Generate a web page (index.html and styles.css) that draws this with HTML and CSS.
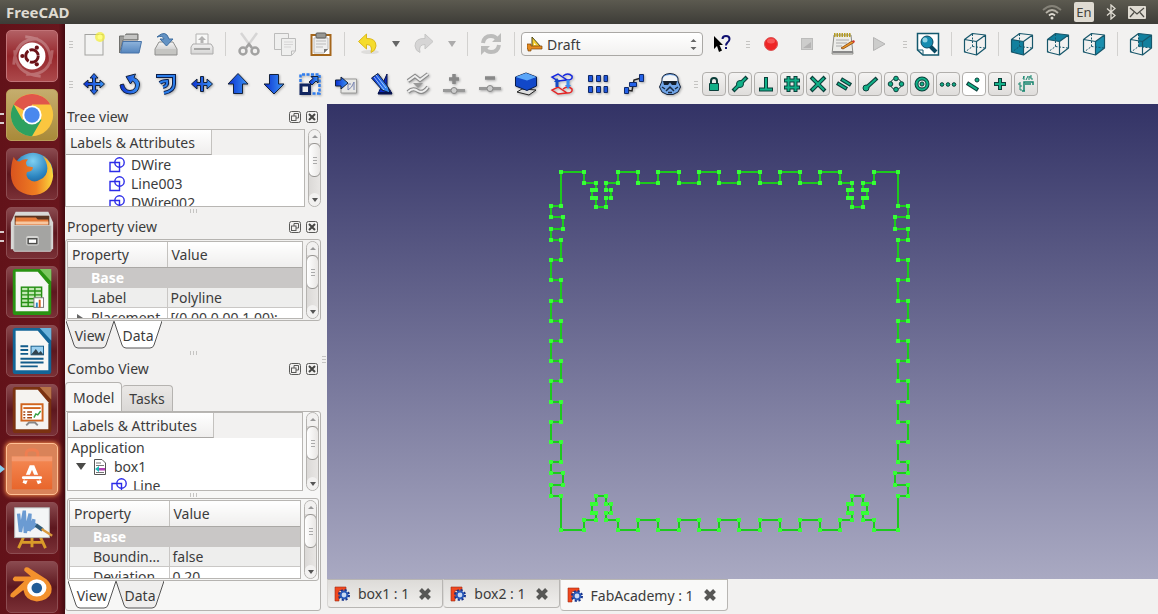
FILE: index.html
```html
<!DOCTYPE html>
<html lang="en">
<head>
    <meta charset="UTF-8">
    <meta name="viewport" content="width=device-width, initial-scale=1.0">
    <title>FreeCAD</title>
    <link rel="stylesheet" href="styles.css">
</head>
<body>
    <!-- Shared gradients and symbols -->
    <svg class="defs" width="0" height="0" aria-hidden="true">
        <defs>
            <linearGradient id="blue" x1="0" y1="0" x2="1" y2="0"><stop offset="0" stop-color="#0a2fd0"/><stop offset="1" stop-color="#3d96f5"/></linearGradient>
            <linearGradient id="grey" x1="0" y1="0" x2="0" y2="1"><stop offset="0" stop-color="#f4f4f4"/><stop offset="1" stop-color="#b9b9b9"/></linearGradient>
            <linearGradient id="folder" x1="0" y1="0" x2="0" y2="1"><stop offset="0" stop-color="#8fb4dc"/><stop offset="1" stop-color="#5585bd"/></linearGradient>
            <linearGradient id="orange" x1="0" y1="0" x2="0" y2="1"><stop offset="0" stop-color="#f58a55"/><stop offset="1" stop-color="#e8662c"/></linearGradient>
            <radialGradient id="globe" cx="0.5" cy="0.2" r="0.8"><stop offset="0" stop-color="#7fd0f2"/><stop offset="0.5" stop-color="#2b84bf"/><stop offset="1" stop-color="#12386e"/></radialGradient>
            <linearGradient id="fox" x1="0" y1="0" x2="1" y2="0"><stop offset="0" stop-color="#d9541e"/><stop offset="0.6" stop-color="#ef7d22"/><stop offset="1" stop-color="#fbd93c"/></linearGradient>
        </defs>
        <symbol id="shape" viewBox="0 0 16 16">
            <g fill="none" stroke="#2c2ce8" stroke-width="1.4"><path d="M1 5.500H10.500V14.500H1Z"/><circle cx="10.500" cy="5.500" r="4.700"/></g>
        </symbol>
        <symbol id="float" viewBox="0 0 12 12">
            <g fill="none" stroke="#5a5a58" stroke-width="1"><rect x="0.500" y="0.500" width="11" height="11" rx="2"/><path d="M5 5V2.500H9.500V7H7"/><rect x="2.500" y="5" width="4.500" height="4.500"/></g>
        </symbol>
        <symbol id="close" viewBox="0 0 12 12">
            <rect x="0.500" y="0.500" width="11" height="11" rx="2" fill="none" stroke="#5a5a58"/><path d="M3 3L9 9M9 3L3 9" stroke="#454543" stroke-width="2"/>
        </symbol>
        <symbol id="freecad" viewBox="0 0 16 16">
            <path d="M1 1H12V4.500H5V6.500H9V9.500H5V15H1Z" fill="#f0481f" stroke="#a02a10" stroke-width="0.600"/>
            <circle cx="10" cy="9" r="4.700" fill="none" stroke="#15318a" stroke-width="2.600" stroke-dasharray="2 1.690"/>
            <circle cx="10" cy="9" r="3.400" fill="#c9d8f2" stroke="#2858b8" stroke-width="2"/>
        </symbol>
        <symbol id="cross" viewBox="0 0 14 14">
            <path d="M2.500 2.500L11.500 11.500M11.500 2.500L2.500 11.500" stroke="#575755" stroke-width="4"/>
        </symbol>
        <symbol id="cube" viewBox="0 0 24 24">
            <path d="M1.500 7.500L13.500 9.500V23L1.500 20ZM1.500 7.500L9.500 1.500L22.500 3L13.500 9.500M22.500 3V16L13.500 23" fill="none" stroke="#17576b" stroke-width="1.200" stroke-linejoin="round"/>
            <path d="M9.500 2V14.500L2 20M9.500 14.500L22 16" fill="none" stroke="#17576b" stroke-width="1" stroke-dasharray="2 1.500"/>
        </symbol>
    </svg>

    <header class="menubar">
        <h1>FreeCAD</h1>
        <div class="indicators">
            <svg width="20" height="16" viewBox="0 0 20 16" fill="none" stroke-width="1.800"><path d="M1 6Q10-2 19 6" stroke="#858278"/><path d="M4 9Q10 3 16 9" stroke="#b5b1a6"/><path d="M7 11.500Q10 8.500 13 11.500" stroke="#dfdbd2"/><circle cx="10" cy="14" r="1.500" fill="#dfdbd2"/></svg>
            <span class="lang">En</span>
            <svg width="10" height="16" viewBox="0 0 10 16" fill="none" stroke="#dfdbd2" stroke-width="1.300"><path d="M1 4.500L9 11.500L5 15V1L9 4.500L1 11.500"/></svg>
            <svg width="18" height="13" viewBox="0 0 18 13"><rect width="18" height="13" rx="1" fill="#dfdbd2"/><path d="M2 2L9 8L16 2M2 11L6 6.500M16 11L12 6.500" fill="none" stroke="#4a4943" stroke-width="1.200"/></svg>
        </div>
    </header>

    <div class="desktop">
        <!-- Launcher -->
        <nav class="launcher">
            <button class="tile red" aria-label="Search your computer">
                <svg viewBox="0 0 52 52"><path d="M7 35Q8 8 32 8M19 6Q47 8 45 34M47 20Q46 47 20 45M35 47Q8 45 8 20" fill="none" stroke="#fff" stroke-opacity="0.250" stroke-width="3"/><circle cx="26" cy="26" r="14" fill="#fff"/><circle cx="26" cy="26" r="6.500" fill="none" stroke="#6c1218" stroke-width="3" stroke-dasharray="12.200 1.420"/><g fill="#6c1218"><circle cx="16" cy="26" r="2.200"/><circle cx="31" cy="17.300" r="2.200"/><circle cx="31" cy="34.700" r="2.200"/></g></svg>
            </button>
            <button class="tile gold open" aria-label="Google Chrome">
                <svg viewBox="0 0 52 52"><circle cx="26" cy="26" r="22" fill="#fbc63f"/><path d="M26 26L7 15A22 22 0 0 1 45 15H26Z" fill="#e0564a"/><path d="M7 15A22 22 0 0 0 26 48L36 31L26 26L16 31Z" fill="#2da160"/><circle cx="26" cy="26" r="10" fill="#fff"/><circle cx="26" cy="26" r="8" fill="#4a88ee"/></svg>
            </button>
            <button class="tile" aria-label="Firefox">
                <svg viewBox="0 0 52 52"><circle cx="27" cy="25" r="21" fill="url(#globe)"/><path d="M7 8Q9 13 13 13Q17 10 22 11Q18 14 21 18L27 19Q27 23 21 24Q19 27 22 31Q28 36 34 32Q42 29 42 20Q42 14 37 7Q48 13 48 28Q46 47 26 48Q5 46 4 26Q4 16 7 8Z" fill="url(#fox)"/></svg>
            </button>
            <button class="tile open" aria-label="Files">
                <svg viewBox="0 0 52 52"><path d="M9 4H43L48 15V43H4V15Z" fill="#d8d8d6"/><rect x="8" y="8" width="36" height="12" fill="#5a3420"/><path d="M9 10H30L32 12H43V19H9Z" fill="#e77b39"/><path d="M9 14H43V17H9Z" fill="#f7c7a0"/><rect x="7" y="18" width="39" height="27" rx="1" fill="#a4a4a2" stroke="#d0d0ce"/><rect x="20" y="29" width="13" height="10" rx="2" fill="#d5d5d3"/><rect x="22" y="32" width="9" height="5" fill="#fff" stroke="#4a4a48" stroke-width="1.500"/></svg>
            </button>
            <button class="tile" aria-label="LibreOffice Calc">
                <svg viewBox="0 0 52 52"><rect x="6" y="2" width="40" height="48" rx="3" fill="#2a9312"/><path d="M9 5H32L43 18V46H9Z" fill="#f7f7f5"/><path d="M34 2H46V15Z" fill="#7cc65f"/><g fill="none" stroke="#279015" stroke-width="1.500"><rect x="15" y="21" width="21" height="20" fill="#c4e9b5"/><path d="M15 25H36M15 29H36M15 33H36M15 37H36M22 21V41M29 21V41"/></g><rect x="28" y="32" width="10" height="10" fill="#fff" stroke="#777"/><path d="M30 42V37H32V42" fill="#2b88c4"/><path d="M33 42V34H35V42" fill="#d95d1a"/></svg>
            </button>
            <button class="tile" aria-label="LibreOffice Writer">
                <svg viewBox="0 0 52 52"><rect x="6" y="2" width="40" height="48" rx="3" fill="#136597"/><path d="M9 5H32L43 18V46H9Z" fill="#f7f7f5"/><path d="M34 2H46V15Z" fill="#6cb3dc"/><path d="M14 21H22M14 25H22M14 29H22M14 34H38M14 38H38M14 42H32" stroke="#135c8b" stroke-width="2"/><rect x="25" y="21" width="13" height="9" fill="#9bd0f0" stroke="#135c8b"/><path d="M25 30L30 24L33 28L35 26L38 30Z" fill="#31444f"/></svg>
            </button>
            <button class="tile" aria-label="LibreOffice Impress">
                <svg viewBox="0 0 52 52"><rect x="6" y="2" width="40" height="48" rx="3" fill="#7b3210"/><path d="M9 5H32L43 18V46H9Z" fill="#f5f3f0"/><path d="M34 2H46V15Z" fill="#b77347"/><rect x="15" y="20" width="22" height="17" fill="#fff" stroke="#d0651f" stroke-width="2"/><path d="M17 24H35" stroke="#d0651f" stroke-width="2"/><path d="M17 28H19M17 31H19M17 34H19M21 28H26M21 31H26M21 34H26" stroke="#a34513" stroke-width="1.500"/><path d="M28 34L30 30L32 31L35 27" fill="none" stroke="#35a044" stroke-width="1.500"/><path d="M26 38V40M20 42L23 39H29L32 42" fill="none" stroke="#888" stroke-width="2"/></svg>
            </button>
            <button class="tile glow active" aria-label="Ubuntu Software Center">
                <svg viewBox="0 0 52 52"><path d="M20 18V10Q20 6 26 6Q32 6 32 10V18" fill="none" stroke="#ef7e51" stroke-width="3"/><path d="M5 13H47V47H5Z" fill="url(#orange)"/><path d="M5 13H47V18H5Z" fill="#f49a70"/><path d="M18 41L25 24H27L34 41" fill="none" stroke="#fff" stroke-width="4"/><path d="M18 35H34" stroke="#ee7440" stroke-width="6"/><path d="M17 35H35" stroke="#fff" stroke-width="3" stroke-linecap="round"/></svg>
            </button>
            <button class="tile" aria-label="KolourPaint">
                <svg viewBox="0 0 52 52"><path d="M17 36L12 47M35 36L40 47M26 36V46M15 41H37" stroke="#d99b29" stroke-width="3"/><rect x="8" y="5" width="36" height="31" fill="#f3f5f6" stroke="#b5bbbd"/><path d="M12 11L14 30L18 8L19 31L24 11L23 29L28 17L27 25L31 22" fill="none" stroke="#6b9bd2" stroke-width="3.500"/><path d="M30 23L37 28" stroke="#315b78" stroke-width="4"/><path d="M36 27L47 34" stroke="#d99a3c" stroke-width="2.500"/></svg>
            </button>
            <button class="tile" aria-label="Blender">
                <svg viewBox="0 0 52 52"><path d="M18 7Q20 4 24 7L41 18Q48 24 46 32Q43 40 31 41Q19 40 17 29L7 37Q2 37 4 33L18 20H8Q4 18 8 15H25L18 9Z" fill="#f3912d"/><ellipse cx="31" cy="27" rx="10" ry="9" fill="#fff"/><circle cx="31" cy="27" r="5.500" fill="#215c97"/></svg>
            </button>
            <button class="tile stack" aria-label="More applications"></button>
        </nav>

        <div class="app">
            <!-- File, workbench, macro and view toolbars -->
            <div class="toolbar">
                <span class="grip"></span>
                <button class="tool" aria-label="New"><svg viewBox="0 0 24 24"><rect x="3" y="2.500" width="18" height="20.500" fill="#f3f3f2" stroke="#a3a3a0"/><circle cx="18" cy="5" r="5" fill="#f4ee30" opacity="0.700"/><circle cx="18" cy="5" r="2.500" fill="#ffff80"/></svg></button>
                <button class="tool" aria-label="Open"><svg viewBox="0 0 24 24"><path d="M1.500 21V4H7L8 2H20V8H5Z" fill="#9b9b98" stroke="#71716e"/><path d="M6 4H19M6 6H19" stroke="#eee"/><path d="M5 9.500H23.500L21 21H2.500Z" fill="url(#folder)" stroke="#4773a8"/></svg></button>
                <button class="tool" aria-label="Save"><svg viewBox="0 0 24 24"><path d="M5 10H19L23 17V23H1V17Z" fill="url(#grey)" stroke="#90908d"/><path d="M2 17H22V22H2Z" fill="#c5c5c2"/><path d="M3 5Q12-3 15 7H19L12.500 14L6 7H10Q9 3 3 5Z" fill="#6292c4" stroke="#3e6d9f"/></svg></button>
                <button class="tool faded" aria-label="Print"><svg viewBox="0 0 24 24"><path d="M6 12V2H18V12" fill="#fff" stroke="#777"/><path d="M12 4L16 8H13.500V11H10.500V8H8Z" fill="#777"/><path d="M3 12H21L23 15V22H1V15Z" fill="url(#grey)" stroke="#666"/><path d="M4 17H20" stroke="#333" stroke-width="1.500"/></svg></button>
                <span class="separator"></span>
                <button class="tool faded" aria-label="Cut"><svg viewBox="0 0 24 24"><path d="M4 1L15 16M20 1L9 16" stroke="#bbb" stroke-width="2.500"/><g fill="none" stroke="#555" stroke-width="2.500"><circle cx="6" cy="19" r="3.500"/><circle cx="18" cy="19" r="3.500"/><path d="M9 16L12 12L15 16"/></g></svg></button>
                <button class="tool faded" aria-label="Copy"><svg viewBox="0 0 24 24" fill="#eee" stroke="#888"><path d="M1.500 1.500H15.500V17.500H1.500Z"/><path d="M8.500 6.500H22.500V19L18.500 23.500H8.500ZM22 19H18.500V23"/><path d="M11 10H20M11 12.500H20M11 15H18" stroke="#bbb"/></svg></button>
                <button class="tool" aria-label="Paste"><svg viewBox="0 0 24 24"><rect x="2.500" y="3" width="19" height="20" fill="#fff" stroke="#a5671c" stroke-width="2"/><path d="M5 6H19V17L15 21H5Z" fill="#eee" stroke="#bbb"/><path d="M7 9H17M7 12H17M7 15H14" stroke="#bbb"/><path d="M15 21V17H19Z" fill="#777"/><rect x="7" y="1" width="10" height="5" rx="1" fill="#989894" stroke="#5d5d5a"/></svg></button>
                <span class="separator"></span>
                <button class="tool" aria-label="Undo"><svg viewBox="0 0 24 24"><ellipse cx="14" cy="20" rx="9" ry="2" fill="#dedddb"/><path d="M2.500 9.500L10.500 2V6.500Q20 6 20 14Q19.500 19 15 20.500Q17 12.500 10.500 12.500V17Z" fill="#f5dc2d" stroke="#dcb81b"/></svg></button>
                <button class="drop" aria-label="Undo history"></button>
                <button class="tool faded" aria-label="Redo"><svg viewBox="0 0 24 24"><path d="M21 9.500L13 2V6.500Q3 6 3 14Q3.500 19 8 20.500Q6 12.500 13 12.500V17Z" fill="#bbb" stroke="#999"/></svg></button>
                <button class="drop faded" aria-label="Redo history"></button>
                <span class="separator"></span>
                <button class="tool faded" aria-label="Refresh"><svg viewBox="0 0 24 24" fill="none" stroke="#888" stroke-width="4"><path d="M4 11Q5 4 12 4Q16 4 18 7M20 13Q19 20 12 20Q8 20 6 17"/><path d="M22 1V10H13ZM2 23V14H11Z" fill="#888" stroke="none"/></svg></button>
                <span class="separator"></span>
                <div class="workbench">
                    <svg width="16" height="16" viewBox="0 0 16 16"><path d="M5 1L14 11H5Z" fill="#f2cd32" stroke="#4d4718"/><path d="M7 7L9 9H7Z" fill="#fff"/><path d="M0 8H4V10H15V13H4V15H1V13H0Z" fill="#e48b21" stroke="#7c4508" stroke-width="0.700"/></svg>
                    <select aria-label="Workbench"><option>Draft</option></select>
                    <svg class="updown" width="7" height="13" viewBox="0 0 7 13" fill="#666"><path d="M0.500 4L3.500 1L6.500 4ZM0.500 9L3.500 12L6.500 9Z"/></svg>
                </div>
                <button class="tool" aria-label="What's this?"><svg viewBox="0 0 24 24"><path d="M4 4V17L7 14L9 20L12 18.500L9.500 13H13Z" fill="#000"/><path d="M12.500 7Q12.500 4 16 4Q19.500 4 19.500 7Q19.500 9 17.500 10.500Q16 12 16 13.500M16 15V17" fill="none" stroke="#101070" stroke-width="2"/></svg></button>
                <span class="grip"></span>
                <button class="tool" aria-label="Record macro"><svg viewBox="0 0 24 24"><circle cx="12" cy="12" r="6.500" fill="#ee2626" stroke="#d55"/><ellipse cx="12" cy="9" rx="4" ry="2.500" fill="#f77" opacity="0.600"/></svg></button>
                <button class="tool faded" aria-label="Stop macro"><svg viewBox="0 0 24 24"><rect x="6.500" y="6.500" width="11" height="11" fill="#aaa" stroke="#888"/><path d="M8 16L16 10V16Z" fill="#777"/></svg></button>
                <button class="tool" aria-label="Macros"><svg viewBox="0 0 24 24"><path d="M3 3H20L22 22H1Z" fill="#ecece9" stroke="#8d8d88"/><path d="M1.500 20H22" stroke="#888" stroke-width="2"/><path d="M3 3H20" stroke="#b49b22" stroke-width="4" stroke-dasharray="1.500 1"/><path d="M5 8H18M5 11H16M5 14H11" stroke="#aaa"/><path d="M10 16L21 9L23 10.500L12 17Z" fill="#ee9a27" stroke="#804414" stroke-width="0.800"/><path d="M21 9L23 8L24 10L22.500 11Z" fill="#d4392e"/></svg></button>
                <button class="tool faded" aria-label="Run macro"><svg viewBox="0 0 24 24"><path d="M6.500 5.500L18 12L6.500 18.500Z" fill="#aaa" stroke="#777"/></svg></button>
                <span class="grip"></span>
                <button class="tool" aria-label="Fit all"><svg viewBox="0 0 24 24"><path d="M1.500 1.500H22.500V23H7L1.500 18Z" fill="#fff" stroke="#14596e" stroke-width="1.500"/><path d="M1.500 18H7V23" fill="none" stroke="#14596e"/><path d="M14 14L20 20" stroke="#0b4a62" stroke-width="4"/><circle cx="11" cy="10" r="6" fill="#168cb0" stroke="#0b4a62"/><circle cx="9" cy="8" r="2.500" fill="#8fd2e3"/></svg></button>
                <span class="separator"></span>
                <button class="tool" aria-label="Axonometric view"><svg viewBox="0 0 24 24"><use href="#cube"/></svg></button>
                <span class="separator"></span>
                <button class="tool" aria-label="Front view"><svg viewBox="0 0 24 24"><path d="M1.500 7.500L13.500 9.500V23L1.500 20Z" fill="#12809e"/><use href="#cube"/></svg></button>
                <button class="tool" aria-label="Top view"><svg viewBox="0 0 24 24"><path d="M1.500 7.500L9.500 1.500L22.500 3L13.500 9.500Z" fill="#12809e"/><use href="#cube"/></svg></button>
                <button class="tool" aria-label="Right view"><svg viewBox="0 0 24 24"><path d="M13.500 9.500L22.500 3V16L13.500 23Z" fill="#1b8fae"/><use href="#cube"/></svg></button>
                <span class="separator"></span>
                <button class="tool" aria-label="Rear view"><svg viewBox="0 0 24 24"><path d="M9.500 1.500L22.500 3V16L9.500 14.500Z" fill="#12809e"/><use href="#cube"/></svg></button>
            </div>

            <!-- Draft modification and snap toolbars -->
            <div class="toolbar draft">
                <span class="grip"></span>
                <button class="tool" aria-label="Move"><svg viewBox="0 0 24 24"><path class="solid" d="M12 1.500L16 6H13.500V10.500H18V8L22.500 12L18 16V13.500H13.500V18H16L12 22.500L8 18H10.500V13.500H6V16L1.500 12L6 8V10.500H10.500V6H8Z"/></svg></button>
                <button class="tool" aria-label="Rotate"><svg viewBox="0 0 24 24"><path class="solid" d="M2 13L5.500 12Q7 18.500 12 18.500Q17.500 18 17.500 13Q17 10 14.500 9L12.500 12L8 4.500L17.500 2L16 5.500Q22 8 21.500 13Q20.500 22 12 22Q3 21.500 2 13Z"/></svg></button>
                <button class="tool" aria-label="Offset"><svg viewBox="0 0 24 24" fill="none"><path d="M2 4H20V12Q20 19 10 21M6 11Q8 9 13 9Q14 14 9 15" stroke="#0c1e4a" stroke-width="4"/><path d="M3 4H20V12Q20 19 10 21M6 11Q8 9 13 9Q14 14 9 15" stroke="#2c7eeb" stroke-width="2"/></svg></button>
                <button class="tool" aria-label="Trim or extend"><svg viewBox="0 0 24 24"><path class="solid" d="M1.500 12L7 7V10.500H10.500V4.500H13.500V10.500H17V7L22.500 12L17 17V13.500H13.500V19.500H10.500V13.500H7V17Z"/></svg></button>
                <button class="tool" aria-label="Upgrade"><svg viewBox="0 0 24 24"><path class="solid" d="M12 1.500L22 12H16.500V21.500H7.500V12H2Z"/></svg></button>
                <button class="tool" aria-label="Downgrade"><svg viewBox="0 0 24 24"><path class="solid" d="M12 22L22 12H16.500V2.500H7.500V12H2Z"/></svg></button>
                <button class="tool" aria-label="Scale"><svg viewBox="0 0 24 24"><path d="M2.500 10V2.500H21.500V21.500H14" fill="none" stroke="#2f7df0" stroke-width="2.500" stroke-dasharray="3 1.500"/><rect x="3" y="13" width="8.500" height="8.500" fill="#eee" stroke="#102560" stroke-width="3"/><path class="solid" d="M11 10L15 6.500L13 4.500H20V11L18 9L14 13Z"/></svg></button>
                <button class="tool" aria-label="Drawing"><svg viewBox="0 0 24 24"><path d="M9 7H22.500V21H7V14" fill="#e7e7e5" stroke="#9a9a98"/><path d="M14 18V12H17M14 18Q18 16 20 10V18" fill="none" stroke="#7782b0"/><path class="solid" d="M1.500 8H7V5L14 11L7 17V14H1.500Z"/></svg></button>
                <button class="tool" aria-label="Edit"><svg viewBox="0 0 24 24"><path d="M17 2V14L20 18L22 22H8Z" fill="#0d2ac4" stroke="#07134e"/><path class="solid" d="M1.500 6L8 1.500L18 15L20 21L12 18Z"/><path d="M4 5L14 18M6 3L16 16" stroke="#bfe0ff" stroke-width="0.800"/><path d="M8 21H22" stroke="#07134e" stroke-width="2"/></svg></button>
                <button class="tool" aria-label="Wire to B-spline"><svg viewBox="0 0 24 24" fill="none"><g stroke="#888" stroke-width="4"><path d="M2 9L9 4L14 8L22 2M2 20Q7 15 12 19Q17 22 22 15"/></g><path d="M2 9L9 4L14 8L22 2M2 20Q7 15 12 19Q17 22 22 15" stroke="#eee" stroke-width="2"/><path d="M7 11H17L12 16Z" fill="#999"/></svg></button>
                <button class="tool" aria-label="Add point"><svg viewBox="0 0 24 24"><path d="M12 2V12M7 7H17" stroke="#888" stroke-width="3.500"/><path d="M1 18.500H23" stroke="#999" stroke-width="3"/><circle cx="12" cy="18.500" r="3" fill="#ccc" stroke="#888"/></svg></button>
                <button class="tool" aria-label="Remove point"><svg viewBox="0 0 24 24"><path d="M7 6H17" stroke="#888" stroke-width="3.500"/><path d="M1 16.500H23" stroke="#999" stroke-width="3"/><circle cx="12" cy="16.500" r="3" fill="#ccc" stroke="#888"/></svg></button>
                <button class="tool" aria-label="Shape 2D view"><svg viewBox="0 0 24 24"><path d="M3 20L8 17L22 18L15 23Z" fill="#ddd" stroke="#222"/><path d="M1.500 5L12 1L22.500 5V14L13 18.500L1.500 14Z" fill="#1248c9" stroke="#081c4c"/><path d="M1.500 5L12 1L22.500 5L13 8.500Z" fill="#5ba6f8"/></svg></button>
                <button class="tool" aria-label="Draft to sketch"><svg viewBox="0 0 24 24"><g fill="none" stroke-width="1.500"><path d="M8 2L17 8L8 9L2 5ZM13 4Q18 0 22 4Q23 8 17 8" stroke="#1527df"/><path d="M8 15L17 21L8 22L2 18ZM13 17Q18 13 22 17Q23 21 17 21" stroke="#e52525"/></g><path d="M7 6L10 10H8.500V15H5.500V10H4Z" fill="#174bc4"/><path d="M18 17L21 13H19.500V8H16.500V13H15Z" fill="#3b8bef"/></svg></button>
                <button class="tool" aria-label="Array"><svg viewBox="0 0 24 24" fill="#1e55dd" stroke="#102a68"><path d="M2.500 3.500H6.500V9.500H2.500ZM10.500 3.500H14.500V9.500H10.500ZM18 3.500H21.500V9.500H18ZM2.500 14.500H6.500V20.500H2.500ZM10.500 14.500H14.500V20.500H10.500ZM18 14.500H21.500V20.500H18Z"/></svg></button>
                <button class="tool" aria-label="Path array"><svg viewBox="0 0 24 24"><path d="M4 18L10 19L12 8L19 6" fill="none" stroke="#222" stroke-width="1.500"/><g fill="#2462e8" stroke="#102a68"><path d="M2.500 15.500H6.500V21.500H2.500ZM7.500 10.500H14.500V14.500H7.500ZM17.500 2.500H21.500V9.500H17.500Z"/></g></svg></button>
                <button class="tool" aria-label="Clone"><svg viewBox="0 0 24 24"><path d="M4 9Q3 2 12 1.500Q21 2 20 9L22.500 15L20 20L15 22.500H9L4 20L1.500 15Z" fill="#70a5e8" stroke="#152238"/><path d="M4.500 9Q4 3 12 3Q20 3 19.500 9Z" fill="#f2f4f6"/><path d="M5 9H19L18 13H14L12 10.500L10 13H6Z" fill="#15202e"/><path d="M8 19L12 15L16 19M10 20.500H14M4 15L7 17M20 15L17 17" fill="none" stroke="#192a42" stroke-width="1.500"/></svg></button>
                <span class="grip"></span>
                <button class="snap" aria-label="Toggle snap"><svg viewBox="0 0 18 18"><path d="M6 9V6Q6 3 9 3Q12 3 12 6V9" fill="none" stroke="#0b3f3a" stroke-width="2"/><path d="M4.500 8.500H13.500V15.500H4.500Z" fill="#12b088" stroke="#0b3f3a"/></svg></button>
                <button class="snap" aria-label="Snap midpoint"><svg viewBox="0 0 18 18"><path class="edge" d="M2 16L16 2"/><circle class="dot" cx="9" cy="9" r="3.500"/><path class="core" d="M3 15L15 3"/></svg></button>
                <button class="snap" aria-label="Snap perpendicular"><svg viewBox="0 0 18 18"><path class="edge" d="M9 2V14M2 14.500H16"/><path class="core" d="M9 3V14M3 14.500H15"/></svg></button>
                <button class="snap" aria-label="Snap grid"><svg viewBox="0 0 18 18"><path class="edge" d="M5.500 1V17M12.500 1V17M1 5.500H17M1 12.500H17"/><path class="core" d="M5.500 2V16M12.500 2V16M2 5.500H16M2 12.500H16"/></svg></button>
                <button class="snap" aria-label="Snap intersection"><svg viewBox="0 0 18 18"><path class="edge" d="M2 2L16 16M16 2L2 16"/><path class="core" d="M3 3L15 15M15 3L3 15"/></svg></button>
                <button class="snap" aria-label="Snap parallel"><svg viewBox="0 0 18 18"><path class="edge" d="M6 4L16 10M2 8L12 14"/><path class="core" d="M7 4.500L15 9.500M3 8.500L11 13.500"/></svg></button>
                <button class="snap" aria-label="Snap endpoint"><svg viewBox="0 0 18 18"><path class="edge" d="M5 13L16 3"/><circle class="dot" cx="5" cy="13" r="3"/><path class="core" d="M5 13L15 4"/></svg></button>
                <button class="snap" aria-label="Snap angle"><svg viewBox="0 0 18 18"><circle cx="9" cy="9" r="5.500" fill="none" stroke="#0b3f3a"/><g class="dot"><circle cx="9" cy="3.500" r="2.300"/><circle cx="9" cy="14.500" r="2.300"/><circle cx="3.500" cy="9" r="2.300"/><circle cx="14.500" cy="9" r="2.300"/></g></svg></button>
                <button class="snap" aria-label="Snap center"><svg viewBox="0 0 18 18"><circle class="edge" cx="9" cy="9" r="5.500"/><circle class="core" cx="9" cy="9" r="5.500"/><circle class="dot" cx="9" cy="9" r="2"/></svg></button>
                <button class="snap" aria-label="Snap extension"><svg viewBox="0 0 18 18"><g class="dot"><circle cx="3" cy="9.500" r="1.800"/><circle cx="9" cy="9.500" r="1.800"/><circle cx="15" cy="9.500" r="1.800"/></g></svg></button>
                <button class="snap on" aria-label="Snap near"><svg viewBox="0 0 18 18"><path class="edge" d="M2 8L13 15"/><path class="core" d="M3 8.700L12 14.300"/><circle class="dot" cx="12" cy="5" r="2"/></svg></button>
                <button class="snap" aria-label="Snap ortho"><svg viewBox="0 0 18 18"><path class="edge" d="M9 3V15M3 9H15"/><path class="core" d="M9 4V14M4 9H14"/></svg></button>
                <button class="snap" aria-label="Snap dimensions"><svg viewBox="0 0 18 18" fill="none" stroke="#16846d"><path d="M5 16H8M7 16V7H16V10M8 9H14" stroke-width="1.500"/><path d="M6 4L7 1V5M9 5L11 1M12 1V5M15 1H13V3H15V5M4 8H2V10H4V12H2M2 14H4V16"/></svg></button>
            </div>

            <div class="workspace">
                <aside class="dock">
                    <!-- Tree view -->
                    <div class="panel-title"><h2>Tree view</h2><button aria-label="Float tree view"><svg><use href="#float"/></svg></button><button aria-label="Close tree view"><svg><use href="#close"/></svg></button></div>
                    <section class="scroll-area tree-area">
                        <div class="tree">
                            <div class="tree-head"><span>Labels &amp; Attributes</span></div>
                            <ul>
                                <li class="child"><svg><use href="#shape"/></svg>DWire</li>
                                <li class="child"><svg><use href="#shape"/></svg>Line003</li>
                                <li class="child"><svg><use href="#shape"/></svg>DWire002</li>
                            </ul>
                        </div>
                        <div class="scrollbar"><i class="up"></i><i class="thumb"></i><i class="down"></i></div>
                    </section>
                    <div class="splitter"></div>

                    <!-- Property view -->
                    <div class="panel-title"><h2>Property view</h2><button aria-label="Float property view"><svg><use href="#float"/></svg></button><button aria-label="Close property view"><svg><use href="#close"/></svg></button></div>
                    <section class="scroll-area property-area">
                        <div class="table-wrap">
                            <table>
                                <thead><tr><th>Property</th><th>Value</th></tr></thead>
                                <tbody>
                                    <tr class="group"><td colspan="2">Base</td></tr>
                                    <tr class="alt"><td>Label</td><td>Polyline</td></tr>
                                    <tr><td class="closed">Placement</td><td>[(0.00 0.00 1.00);</td></tr>
                                </tbody>
                            </table>
                        </div>
                        <div class="scrollbar"><i class="up"></i><i class="thumb"></i><i class="down"></i></div>
                    </section>
                    <div class="slant-tabs">
                        <button><svg viewBox="0 0 48 28" preserveAspectRatio="none"><path d="M0 0L8 24Q9 27 12 27H36Q39 27 40 24L48 0"/></svg><span>View</span></button>
                        <button class="current"><svg viewBox="0 0 48 28" preserveAspectRatio="none"><path d="M0 0L8 24Q9 27 12 27H36Q39 27 40 24L48 0"/></svg><span>Data</span></button>
                    </div>
                    <div class="splitter"></div>

                    <!-- Combo view -->
                    <div class="panel-title"><h2>Combo View</h2><button aria-label="Float combo view"><svg><use href="#float"/></svg></button><button aria-label="Close combo view"><svg><use href="#close"/></svg></button></div>
                    <div class="combo-tabs"><button class="current">Model</button><button>Tasks</button></div>
                    <section class="combo">
                        <div class="scroll-area tree-area">
                            <div class="tree">
                                <div class="tree-head"><span>Labels &amp; Attributes</span></div>
                                <ul>
                                    <li>Application</li>
                                    <li class="doc"><i class="expanded"></i><svg viewBox="0 0 14 16"><path d="M1.500 0.500H9L12.500 4V15.500H1.500Z" fill="#fff" stroke="#555"/><path d="M3 4H8M3 6.500H11M3 13.500H11" stroke="#777"/><path d="M2 10L6 7V13Z" fill="#1fb5b5"/><path d="M6 9H12V11.500H6Z" fill="#b040b5"/></svg>box1</li>
                                    <li class="child"><svg><use href="#shape"/></svg>Line</li>
                                </ul>
                            </div>
                            <div class="scrollbar"><i class="up"></i><i class="thumb"></i><i class="down"></i></div>
                        </div>
                        <div class="splitter"></div>
                        <div class="scroll-area property-area">
                            <div class="table-wrap">
                                <table>
                                    <thead><tr><th>Property</th><th>Value</th></tr></thead>
                                    <tbody>
                                        <tr class="group"><td colspan="2">Base</td></tr>
                                        <tr class="alt"><td>Boundin…</td><td>false</td></tr>
                                        <tr><td>Deviation</td><td>0.20</td></tr>
                                    </tbody>
                                </table>
                            </div>
                            <div class="scrollbar"><i class="up"></i><i class="thumb"></i><i class="down"></i></div>
                        </div>
                        <div class="slant-tabs">
                            <button class="current"><svg viewBox="0 0 48 28" preserveAspectRatio="none"><path d="M0 0L8 24Q9 27 12 27H36Q39 27 40 24L48 0"/></svg><span>View</span></button>
                            <button><svg viewBox="0 0 48 28" preserveAspectRatio="none"><path d="M0 0L8 24Q9 27 12 27H36Q39 27 40 24L48 0"/></svg><span>Data</span></button>
                        </div>
                    </section>
                </aside>
                <div class="dock-handle"></div>

                <!-- 3D view with the box outline -->
                <main class="documents">
                    <div class="viewport">
                        <svg viewBox="327 104 831 475" shape-rendering="crispEdges">
                            <marker id="vertex" markerWidth="4" markerHeight="4" refX="2" refY="2" markerUnits="userSpaceOnUse"><rect width="4" height="4" fill="#37ff37"/></marker>
                            <path class="wire" d="M561 172H584V183H596V190H592V198H596V207H606V198H611V190H606V183H618V172H638V183H658V172H679V183H699V172H719V183H739V172H760V183H780V172H800V183H820V172H840V183H852V190H848V198H852V207H863V198H867V190H863V183H874V172H898
                                V206H908V217H895V229H908V240H898V260H908V280H898V301H908V321H898V341H908V361H898V381H908V402H898V422H908V442H898V462H908V473H895V485H908V496H898V530
                                H874V520H863V513H867V504H863V496H852V504H848V513H852V520H840V530H820V520H800V530H780V520H760V530H739V520H719V530H699V520H679V530H658V520H638V530H618V520H606V513H611V504H606V496H596V504H592V513H596V520H584V530H561
                                V496H551V485H563V473H551V462H561V442H551V422H561V402H551V381H561V361H551V341H561V321H551V301H561V280H551V260H561V240H551V229H563V217H551V206H561Z"/>
                        </svg>
                    </div>
                    <div class="doc-tabs">
                        <div class="doc-tab"><svg><use href="#freecad"/></svg><a href="#box1">box1 : 1</a><button aria-label="Close box1"><svg><use href="#cross"/></svg></button></div>
                        <div class="doc-tab"><svg><use href="#freecad"/></svg><a href="#box2">box2 : 1</a><button aria-label="Close box2"><svg><use href="#cross"/></svg></button></div>
                        <div class="doc-tab current"><svg><use href="#freecad"/></svg><a href="#fabacademy">FabAcademy : 1</a><button aria-label="Close FabAcademy"><svg><use href="#cross"/></svg></button></div>
                    </div>
                </main>
            </div>
        </div>
    </div>
</body>
</html>
```
FILE: styles.css
```css
* {
    margin: 0;
    padding: 0;
    box-sizing: border-box;
}

body {
    height: 100vh;
    display: flex;
    flex-direction: column;
    overflow: hidden;
    background-color: #f2f1f0;
    color: #3c3c3c;
    font-family: "Noto Sans", "Open Sans", sans-serif;
    font-size: 14px;
    line-height: 19px;
}

button {
    border: none;
    background: none;
    color: inherit;
    font: inherit;
}

svg {
    display: block;
    flex-shrink: 0;
}

.defs {
    position: absolute;
}

/* Top panel */
.menubar {
    flex: 0 0 24px;
    display: flex;
    align-items: center;
    justify-content: space-between;
    padding: 0 12px 0 6px;
    background: linear-gradient(#5c5a50, #3d3c37);
    color: #dfdbd2;
}

.menubar h1 {
    font-size: 15px;
    font-weight: 700;
}

.indicators {
    display: flex;
    align-items: center;
    gap: 12px;
}

.lang {
    width: 20px;
    height: 20px;
    border-radius: 2px;
    background-color: #dfdbd2;
    color: #45443e;
    font-size: 13px;
    line-height: 20px;
    text-align: center;
}

.desktop {
    flex: 1;
    min-height: 0;
    display: flex;
}

/* Launcher */
.launcher {
    flex: 0 0 65px;
    display: flex;
    flex-direction: column;
    gap: 7px;
    padding: 6px 7px 0 6px;
    overflow: hidden;
    background: linear-gradient(90deg, #621219, #69161d 90%, #43090f);
}

.tile {
    flex: 0 0 52px;
    position: relative;
    border: 1px solid #8c4c51;
    border-radius: 5px;
    background: linear-gradient(#8a4a4f, #5d171e 50%, #7a3036);
}

.tile svg {
    width: 50px;
    height: 50px;
}

.tile.red {
    background: linear-gradient(#b26064, #96262b 50%, #ac494b);
    border-color: #c27377;
}

.tile.gold {
    background: linear-gradient(#c5ad6d, #a98a39);
    border-color: #bba05b;
}

.tile.glow {
    background: #d98359;
    border-color: #ffc094;
    box-shadow: 0 0 4px 1px #ef8648;
}

.tile.stack {
    margin: 0 8px;
    background: #c9c5c5;
}

.tile.open::before {
    content: "";
    position: absolute;
    left: -7px;
    top: 23px;
    width: 4px;
    height: 7px;
    border: solid #d8cccd;
    border-width: 2px 0;
}

.tile.active::before {
    content: "";
    position: absolute;
    left: -7px;
    top: 21px;
    border: 4px solid transparent;
    border-left: 5px solid #85cdec;
}

/* Toolbars */
.app {
    flex: 1;
    min-width: 0;
    display: flex;
    flex-direction: column;
}

.toolbar {
    flex: 0 0 40px;
    display: flex;
    align-items: center;
    overflow: hidden;
}

.toolbar > * {
    flex-shrink: 0;
}

.tool {
    width: 36px;
    height: 36px;
    padding: 6px;
}

.tool svg {
    width: 24px;
    height: 24px;
}

.faded {
    opacity: 0.5;
}

.draft .tool svg {
    filter: drop-shadow(1px 1px 1px #aaa);
}

.solid {
    fill: url(#blue);
    stroke: #14223c;
    stroke-width: 1;
}

.grip {
    width: 11px;
    height: 7px;
    background: repeating-linear-gradient(#c5c4c2 0 1px, transparent 1px 3px) center / 4px 7px no-repeat;
}

.tool + .grip {
    margin-left: 2px;
}

.separator {
    width: 11px;
    height: 24px;
    background: linear-gradient(#d2d1cf, #d2d1cf) center / 1px 100% no-repeat;
}

.drop {
    display: flex;
    align-items: center;
    justify-content: center;
    width: 20px;
    height: 36px;
}

.drop::before {
    content: "";
    border: 4px solid transparent;
    border-top: 6px solid #666;
    border-bottom: none;
}

.workbench {
    display: flex;
    align-items: center;
    gap: 4px;
    width: 182px;
    height: 24px;
    margin: 0 1px;
    padding: 0 5px;
    border: 1px solid #aaa8a5;
    border-radius: 4px;
    background: linear-gradient(#fff, #f2f1f0);
}

.workbench select {
    flex: 1;
    border: none;
    background: none;
    appearance: none;
    color: inherit;
    font: inherit;
    outline: none;
}

.snap {
    display: flex;
    align-items: center;
    justify-content: center;
    width: 24px;
    height: 24px;
    margin: 0 1px;
    border: 1px solid #b1afac;
    border-radius: 4px;
    background: linear-gradient(#f4f3f2, #dfdddb);
}

.snap.on {
    background: #fff;
}

.snap svg {
    width: 18px;
    height: 18px;
}

.edge {
    fill: none;
    stroke: #0b3f3a;
    stroke-width: 4;
}

.core {
    fill: none;
    stroke: #12b088;
    stroke-width: 2;
}

.dot {
    fill: #12b088;
    stroke: #0b3f3a;
}

/* Dock panels */
.workspace {
    flex: 1;
    min-height: 0;
    display: flex;
}

.dock {
    flex: 0 0 256px;
    display: flex;
    flex-direction: column;
    padding-bottom: 3px;
}

.dock-handle {
    flex: 0 0 6px;
    background: repeating-linear-gradient(#c5c4c2 0 1px, transparent 1px 3px) center / 4px 7px no-repeat;
}

.panel-title {
    flex: 0 0 25px;
    display: flex;
    align-items: center;
    gap: 5px;
    padding: 0 3px 0 2px;
}

.panel-title h2 {
    flex: 1;
    font-size: 14px;
    font-weight: 400;
}

.panel-title svg {
    width: 12px;
    height: 12px;
}

.scroll-area {
    min-height: 0;
    display: flex;
    gap: 3px;
}

.tree-area {
    flex: 78 1 0;
}

.property-area {
    flex: 78 1 0;
    padding: 1px;
    border: 1px solid #b5b3b0;
    border-radius: 3px;
}

.tree,
.table-wrap {
    flex: 1;
    min-width: 0;
    overflow: hidden;
    border: 1px solid #b8b6b3;
    background-color: #fff;
}

.tree-head {
    display: flex;
    height: 25px;
    background-color: #f2f1f0;
}

.tree-head span {
    padding: 3px 16px 0 4px;
    border-right: 1px solid #c4c2bf;
    border-bottom: 1px solid #aaa8a5;
    background: linear-gradient(#fff, #efeeed);
}

.tree ul {
    list-style: none;
}

.tree li {
    display: flex;
    align-items: center;
    height: 19px;
    padding-left: 3px;
}

.tree li svg {
    width: 16px;
    height: 16px;
    margin-right: 6px;
}

.tree li.child {
    padding-left: 43px;
}

.tree li.doc {
    padding-left: 8px;
}

.expanded {
    margin-right: 6px;
    border: 5px solid transparent;
    border-top: 7px solid #4a4a48;
    border-bottom: none;
}

/* Scrollbars */
.scrollbar {
    flex: 0 0 13px;
    display: flex;
    flex-direction: column;
    align-items: center;
    border: 1px solid #b5b3b0;
    border-radius: 7px;
    background: linear-gradient(90deg, #dbd9d7, #e8e6e4);
    overflow: hidden;
}

.scrollbar .up,
.scrollbar .down {
    flex: 0 0 13px;
    display: flex;
    align-items: center;
    justify-content: center;
    width: 11px;
    background-color: #f2f1f0;
}

.scrollbar .up::before,
.scrollbar .down::before {
    content: "";
    border: 3px solid transparent;
}

.scrollbar .up::before {
    border-top: none;
    border-bottom-color: #999;
}

.scrollbar .down::before {
    border-bottom: none;
    border-top: 4px solid #555;
}

.scrollbar .down {
    margin-top: auto;
    border-radius: 6px;
}

.scrollbar .thumb {
    flex: 0 0 34px;
    width: 13px;
    border: 1px solid #979592;
    border-radius: 6px;
    background:
        repeating-linear-gradient(#aaa 0 1px, transparent 1px 3px) center / 4px 7px no-repeat,
        linear-gradient(90deg, #fff, #e8e6e4);
}

.splitter {
    flex: 0 0 7px;
    background: repeating-linear-gradient(90deg, #c5c4c2 0 1px, transparent 1px 3px) center / 7px 4px no-repeat;
}

/* Property tables */
table {
    width: 100%;
    border-collapse: collapse;
    table-layout: fixed;
}

th {
    height: 25px;
    padding: 0 4px;
    border-bottom: 1px solid #aaa8a5;
    background: linear-gradient(#fff, #efeeed);
    font-weight: 400;
    text-align: left;
}

th:first-child {
    width: 99px;
    border-right: 1px solid #c4c2bf;
}

td {
    height: 20px;
    padding: 0 3px;
    border: 1px solid #c9c7c5;
    border-width: 0 0 1px;
    white-space: nowrap;
    overflow: hidden;
}

td:first-child {
    position: relative;
    padding-left: 23px;
    border-right-width: 1px;
}

.group td {
    background-color: #c9c7c6;
    color: #fff;
    font-weight: 700;
}

.alt td {
    background-color: #eeeeed;
}

.closed::before {
    content: "";
    position: absolute;
    left: 9px;
    top: 6px;
    border: 4px solid transparent;
    border-left: 6px solid #666;
    border-right: none;
}

/* Slanted sheet tabs */
.slant-tabs {
    flex: 0 0 28px;
    display: flex;
    padding-left: 1px;
}

.slant-tabs button {
    position: relative;
    width: 48px;
    height: 28px;
}

.slant-tabs svg {
    position: absolute;
    inset: 0;
    width: 48px;
    height: 28px;
}

.slant-tabs path {
    fill: #efeeed;
    stroke: #555;
}

.slant-tabs .current path {
    fill: #fff;
}

.slant-tabs span {
    position: relative;
}

/* Combo view */
.combo-tabs {
    flex: 0 0 30px;
    display: flex;
    align-items: flex-end;
}

.combo-tabs button {
    height: 26px;
    padding: 0 7px;
    border: 1px solid #b5b3b0;
    border-width: 1px 1px 0 0;
    border-radius: 4px 4px 0 0;
    background: linear-gradient(#eae8e6, #dad8d6);
}

.combo-tabs .current {
    height: 29px;
    border-left-width: 1px;
    background: #f7f7f6;
}

.combo {
    flex: 198 1 0;
    min-height: 0;
    display: flex;
    flex-direction: column;
    padding: 0 1px;
    border: 1px solid #b5b3b0;
    border-radius: 0 3px 3px 3px;
    background-color: #f7f7f6;
}

.combo .slant-tabs {
    flex-basis: 29px;
}

/* Document area */
.documents {
    flex: 1;
    min-width: 0;
    display: flex;
    flex-direction: column;
}

.viewport {
    flex: 1;
    min-height: 0;
    background: linear-gradient(#333366, #a9a9c2);
}

.viewport svg {
    width: 100%;
    height: 100%;
}

.wire {
    fill: none;
    stroke: #1dc91d;
    stroke-width: 2;
    marker-start: url(#vertex);
    marker-mid: url(#vertex);
}

.doc-tabs {
    flex: 0 0 35px;
    display: flex;
    align-items: flex-start;
}

.doc-tab {
    display: flex;
    align-items: center;
    height: 29px;
    padding: 0 10px 0 6px;
    border: 1px solid #b8b6b3;
    border-left-color: #d8d6d4;
    border-radius: 0 0 4px 4px;
    background: linear-gradient(#dddbd8, #f0efed);
}

.doc-tab.current {
    height: 32px;
    background: #f9f9f8;
}

.doc-tab > svg {
    width: 16px;
    height: 16px;
    margin-right: 8px;
}

.doc-tab a {
    color: inherit;
    text-decoration: none;
}

.doc-tab button {
    margin-left: 9px;
}

.doc-tab button svg {
    width: 14px;
    height: 14px;
}
```
